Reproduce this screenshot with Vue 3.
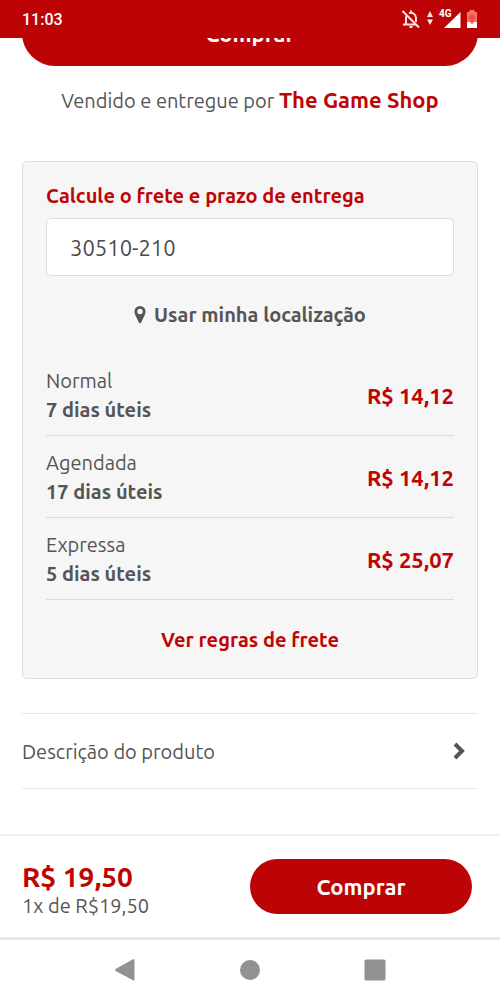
<script setup>
import { ref } from 'vue'

const cep = ref('30510-210')
const options = [
  { name: 'Normal', time: '7 dias úteis', price: 'R$ 14,12' },
  { name: 'Agendada', time: '17 dias úteis', price: 'R$ 14,12' },
  { name: 'Expressa', time: '5 dias úteis', price: 'R$ 25,07' },
]
</script>

<template>
  <div class="page">
    <header class="status">
      <span class="clock">11:03</span>
      <span class="indicators">
        <svg width="20" height="20" viewBox="0 0 20 20" fill="none" stroke="#ffe6e0" stroke-width="2" aria-hidden="true">
          <path d="M5 15V9a5 5 0 0 1 1-3M8 4.300a5 5 0 0 1 7 4.700v4M2 15.500h13" />
          <path d="M10 1.500v3" />
          <path d="M1.500 2 18 18.500" />
          <path d="M8.500 18h3" />
        </svg>
        <svg width="8" height="16" viewBox="0 0 8 16" fill="#ffe6e0" aria-hidden="true">
          <path d="M4 0 7 6H1zM4 14 1 8.500h6z" />
        </svg>
        <span class="network">
          <span class="generation">4G</span>
          <svg width="17" height="17" viewBox="0 0 17 17" fill="#fff" aria-hidden="true"><path d="M16.500 0v16H0z" /></svg>
        </span>
        <svg width="12" height="20" viewBox="0 0 12 20" aria-hidden="true">
          <path d="M3.500 1h5v2H11v16H1V3h2.500z" fill="#ff7065" />
          <path d="M1 13h3l2 2 2-2h3v6H1z" fill="#fff" />
          <path d="M6 5a3.500 3.500 0 0 1 2 6l-2 4-2-4a3.500 3.500 0 0 1 2-6z" fill="#e8534a" />
        </svg>
      </span>
    </header>

    <main class="content">
      <button class="buy buy-top" type="button">Comprar</button>
      <p class="seller">Vendido e entregue por <a href="#">The Game Shop</a></p>

      <section class="shipping">
        <label class="title" for="cep">Calcule o frete e prazo de entrega</label>
        <input id="cep" v-model="cep" class="cep" type="text" inputmode="numeric" />
        <button class="locate" type="button">
          <svg width="12" height="18" viewBox="0 0 12 18" fill="#555" aria-hidden="true">
            <path fill-rule="evenodd" d="M6 0a5.500 5.500 0 0 1 5.500 5.500c0 1.500-.4 2.500-.8 3.500L7.200 16.500q-1.200 1.600-2.400 0L1.300 9C.9 8 .5 7 .5 5.500A5.500 5.500 0 0 1 6 0zm0 2.800a2.700 2.700 0 1 0 0 5.400 2.700 2.700 0 0 0 0-5.400z" />
          </svg>
          Usar minha localização
        </button>
        <ul class="options">
          <li v-for="o in options" :key="o.name">
            <div>
              <div>{{ o.name }}</div>
              <strong>{{ o.time }}</strong>
            </div>
            <span class="price">{{ o.price }}</span>
          </li>
        </ul>
        <a class="rules" href="#">Ver regras de frete</a>
      </section>

      <button class="description" type="button">
        Descrição do produto
        <svg width="12" height="18" viewBox="0 0 12 18" fill="none" stroke="#555" stroke-width="4" aria-hidden="true"><path d="M2 2l7 7-7 7" /></svg>
      </button>
    </main>

    <section class="checkout">
      <div class="amount">
        <div class="total">R$ 19,50</div>
        <div>1x de R$19,50</div>
      </div>
      <button class="buy buy-bottom" type="button">Comprar</button>
    </section>

    <nav class="system">
      <button type="button" aria-label="Voltar">
        <svg width="24" height="24" viewBox="0 0 24 24" fill="#929292"><path d="M20.500 1q1 0 1 1v20q0 1-1 .6L2.500 13q-1-1 0-2z" /></svg>
      </button>
      <button type="button" aria-label="Início">
        <svg width="24" height="24" viewBox="0 0 24 24" fill="#929292"><circle cx="12" cy="12" r="10" /></svg>
      </button>
      <button type="button" aria-label="Recentes">
        <svg width="24" height="24" viewBox="0 0 24 24" fill="#929292"><rect x="1.500" y="1.500" width="21" height="21" rx="1.500" /></svg>
      </button>
    </nav>
  </div>
</template>

<style>
body {
  background: #fff;
}
</style>

<style scoped>
.page {
  min-height: 100vh;
  display: flex;
  flex-direction: column;
  font-family: Ubuntu, "Noto Sans", sans-serif;
  font-size: 20px;
  line-height: 29px;
  color: #555;
}
button,
input {
  font: inherit;
  color: inherit;
  border: 0;
  padding: 0;
  background: none;
}
a {
  color: #bf0404;
  text-decoration: none;
  font-weight: 700;
}
ul,
p {
  margin: 0;
  padding: 0;
  list-style: none;
}
.status {
  display: flex;
  justify-content: space-between;
  align-items: center;
  height: 38px;
  padding: 0 22px;
  background: #bc0305;
  color: #fff;
  font-family: Roboto, sans-serif;
}
.clock {
  font-size: 16px;
  font-weight: 500;
}
.indicators {
  display: flex;
  align-items: center;
  gap: 5px;
}
.network {
  display: flex;
  position: relative;
  padding: 2px 0 0 5px;
}
.generation {
  position: absolute;
  top: -3px;
  left: 0;
  font-size: 10px;
  line-height: 14px;
  font-weight: 700;
}
.content {
  flex: 1;
  display: flex;
  flex-direction: column;
  padding: 0 22px;
  overflow: hidden;
}
.buy {
  border-radius: 33px;
  background: #bc0305;
  color: #fff;
  font-weight: 700;
  font-size: 22px;
}
.buy-top {
  flex: none;
  height: 66px;
  margin-top: -38px;
}
.seller {
  margin: 19px 0 46px;
  text-align: center;
}
.seller a {
  font-size: 22px;
}
.shipping {
  display: flex;
  flex-direction: column;
  padding: 19px 23px 24px;
  border: 1px solid #dcdcdc;
  border-radius: 5px;
  background: #f6f6f6;
}
.title {
  color: #bf0404;
  font-weight: 700;
}
.cep {
  box-sizing: border-box;
  width: 100%;
  height: 58px;
  margin-top: 8px;
  padding: 0 23px;
  border: 1px solid #dcdcdc;
  border-radius: 5px;
  background: #fff;
  font-size: 22px;
  color: #4a4a4a;
}
.locate {
  display: flex;
  justify-content: center;
  align-items: center;
  gap: 8px;
  margin: 24px 0 25px;
  font-weight: 700;
}
.options li {
  display: flex;
  justify-content: space-between;
  align-items: center;
  padding: 12px 0 11px;
  border-bottom: 1px solid #dcdcdc;
}
.price {
  color: #bf0404;
  font-weight: 700;
  font-size: 22px;
}
.rules {
  margin-top: 25px;
  text-align: center;
}
.description {
  display: flex;
  justify-content: space-between;
  align-items: center;
  height: 76px;
  margin: 34px 0 44px;
  padding-right: 13px;
  border-top: 1px solid #e8e8e8;
  border-bottom: 1px solid #e8e8e8;
}
.checkout {
  display: flex;
  justify-content: space-between;
  align-items: flex-start;
  padding: 23px 28px 17px 22px;
  border-top: 2px solid #eee;
}
.amount {
  padding-top: 3px;
}
.total {
  color: #bf0404;
  font-weight: 700;
  font-size: 28px;
}
.buy-bottom {
  width: calc(50% - 3px);
  height: 55px;
}
.system {
  display: flex;
  justify-content: space-around;
  align-items: center;
  height: 60px;
  padding: 0 62px;
  border-top: 3px solid #e8e8e8;
}
.system button {
  display: flex;
}
</style>
